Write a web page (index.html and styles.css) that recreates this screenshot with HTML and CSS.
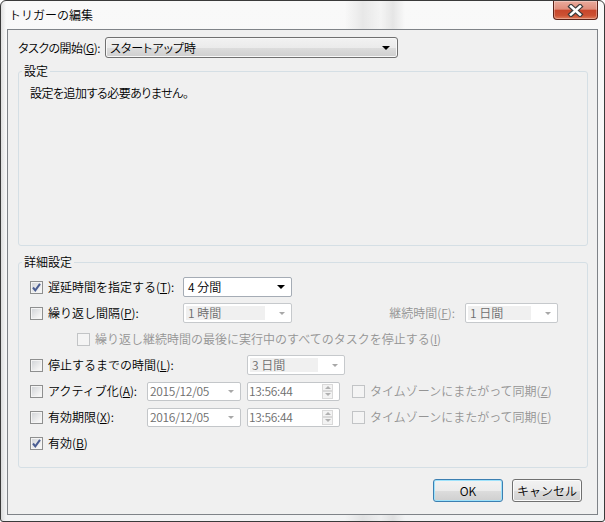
FILE: index.html
```html
<!DOCTYPE html>
<html lang="ja">
<head>
    <meta charset="UTF-8">
    <title>トリガーの編集</title>
    <link rel="stylesheet" href="styles.css">
</head>
<body>
    <div class="window">
        <div class="titlebar">
            <span class="title">トリガーの編集</span>
            <button class="close-btn">
                <svg width="17" height="13" viewBox="0 0 17 13">
                    <path d="M4 2.5 L13 10.5 M13 2.5 L4 10.5" stroke="#3b3b3b" stroke-width="5" stroke-linecap="square"/>
                    <path d="M4 2.5 L13 10.5 M13 2.5 L4 10.5" stroke="#ffffff" stroke-width="2.6" stroke-linecap="square"/>
                </svg>
            </button>
        </div>

        <div class="client">
            <!-- Start condition -->
            <div class="start-row">
                <span class="start-label">タスクの開始(<u>G</u>):</span>
                <div class="dropdown">
                    <span class="dropdown-text">スタートアップ時</span>
                    <span class="arrow"></span>
                </div>
            </div>

            <fieldset class="group">
                <legend>設定</legend>
                <div class="settings-body">設定を追加する必要ありません。</div>
            </fieldset>

            <fieldset class="group group-advanced">
                <legend>詳細設定</legend>
                <div class="rows">
                    <div class="row">
                        <span class="check checked">
                            <svg width="11" height="11" viewBox="0 0 11 11"><path d="M2 5.5 L4.3 8.3 L9 1.8" fill="none" stroke="#4a5d92" stroke-width="2"/></svg>
                        </span>
                        <span class="label w-combo">遅延時間を指定する(<u>T</u>):</span>
                        <div class="combo combo-short">
                            <span class="combo-text">4 分間</span>
                            <span class="arrow"></span>
                        </div>
                    </div>

                    <div class="row">
                        <span class="check"></span>
                        <span class="label w-combo">繰り返し間隔(<u>P</u>):</span>
                        <div class="combo combo-short disabled">
                            <span class="combo-text">1 時間</span>
                            <span class="arrow"></span>
                        </div>
                        <span class="label disabled-text w-duration">継続時間(<u>F</u>):</span>
                        <div class="combo combo-duration disabled">
                            <span class="combo-text">1 日間</span>
                            <span class="arrow"></span>
                        </div>
                    </div>

                    <div class="row row-indent">
                        <span class="check disabled"></span>
                        <span class="label disabled-text">繰り返し継続時間の最後に実行中のすべてのタスクを停止する(<u>I</u>)</span>
                    </div>

                    <div class="row">
                        <span class="check"></span>
                        <span class="label w-stop">停止するまでの時間(<u>L</u>):</span>
                        <div class="combo combo-stop disabled">
                            <span class="combo-text">3 日間</span>
                            <span class="arrow"></span>
                        </div>
                    </div>

                    <div class="row">
                        <span class="check"></span>
                        <span class="label w-date">アクティブ化(<u>A</u>):</span>
                        <div class="datebox">
                            <span class="field-text">2015/12/05</span>
                            <span class="arrow"></span>
                        </div>
                        <div class="timebox">
                            <span class="field-text">13:56:44</span>
                            <span class="spin"><span><i class="up"></i></span><span><i class="down"></i></span></span>
                        </div>
                        <span class="check disabled"></span>
                        <span class="label disabled-text">タイムゾーンにまたがって同期(<u>Z</u>)</span>
                    </div>

                    <div class="row">
                        <span class="check"></span>
                        <span class="label w-date">有効期限(<u>X</u>):</span>
                        <div class="datebox">
                            <span class="field-text">2016/12/05</span>
                            <span class="arrow"></span>
                        </div>
                        <div class="timebox">
                            <span class="field-text">13:56:44</span>
                            <span class="spin"><span><i class="up"></i></span><span><i class="down"></i></span></span>
                        </div>
                        <span class="check disabled"></span>
                        <span class="label disabled-text">タイムゾーンにまたがって同期(<u>E</u>)</span>
                    </div>

                    <div class="row">
                        <span class="check checked">
                            <svg width="11" height="11" viewBox="0 0 11 11"><path d="M2 5.5 L4.3 8.3 L9 1.8" fill="none" stroke="#4a5d92" stroke-width="2"/></svg>
                        </span>
                        <span class="label">有効(<u>B</u>)</span>
                    </div>
                </div>
            </fieldset>

            <div class="buttons">
                <button class="btn btn-default">OK</button>
                <button class="btn">キャンセル</button>
            </div>
        </div>
    </div>
</body>
</html>
```

FILE: styles.css
```css
/* Basic reset */
* {
    margin: 0;
    padding: 0;
    box-sizing: border-box;
}

body {
    background-color: #ffffff;
    font-family: "Noto Sans CJK JP", "Noto Sans", sans-serif;
    font-size: 12px;
    font-weight: 350;
    line-height: 14px;
    color: #000000;
}

u {
    text-decoration: underline;
    text-underline-offset: 1px;
}

/* Window frame */
.window {
    width: 605px;
    height: 522px;
    display: flex;
    flex-direction: column;
    padding: 0 6px 6px;
    border: 1px solid #3a3a3a;
    border-radius: 6px 6px 3px 3px;
    background:
        linear-gradient(90deg, rgba(0, 0, 0, 0.10) 0, rgba(0, 0, 0, 0) 5px),
        linear-gradient(90deg, rgba(0, 0, 0, 0) 57%, rgba(0, 0, 0, 0.07) 60%, rgba(0, 0, 0, 0.02) 63%, rgba(0, 0, 0, 0.08) 65%, rgba(0, 0, 0, 0) 67%),
        linear-gradient(#f9f9f9, #f2f3f4);
}

.titlebar {
    height: 28px;
    display: flex;
    justify-content: space-between;
    align-items: flex-start;
}

.title {
    padding-left: 2px;
    line-height: 28px;
    font-size: 12px;
}

.close-btn {
    width: 45px;
    height: 19px;
    display: flex;
    align-items: center;
    justify-content: center;
    border: 1px solid #5c2218;
    border-top: none;
    border-radius: 0 0 4px 4px;
    background: linear-gradient(#e9ab9d 0%, #df8d7b 45%, #c8462b 52%, #cc5133 80%, #e27d5c 100%);
    box-shadow: inset 0 0 0 1px rgba(255, 255, 255, 0.3);
}

/* Client area */
.client {
    flex: 1;
    display: flex;
    flex-direction: column;
    padding: 0 9px 0 10px;
    background-color: #f0f0f0;
    border: 1px solid #7f8388;
}

.start-row {
    display: flex;
    align-items: center;
    padding-top: 7px;
}

.start-label {
    width: 87px;
    flex-shrink: 0;
    white-space: nowrap;
    letter-spacing: -0.5px;
    font-feature-settings: "palt";
}

.dropdown {
    width: 293px;
    height: 21px;
    display: flex;
    align-items: center;
    justify-content: space-between;
    padding: 0 4px 0 4px;
    border: 1px solid #707070;
    border-radius: 3px;
    background: linear-gradient(#f2f2f2 0%, #ebebeb 50%, #dddddd 51%, #cfcfcf 100%);
    box-shadow: inset 0 0 0 1px #f8f8f8;
    font-feature-settings: "palt";
}

.arrow {
    width: 0;
    height: 0;
    margin-right: 3px;
    border-left: 4px solid transparent;
    border-right: 4px solid transparent;
    border-top: 4px solid #000000;
}

/* Group boxes */
.group {
    margin-top: 6px;
    padding: 0;
    min-width: 0;
    border: 1px solid #d5dfe5;
    border-radius: 3px;
}

.group legend {
    margin-left: 3px;
    padding: 0 2px;
    line-height: 14px;
}

.settings-body {
    height: 167px;
    padding: 8px 0 0 11px;
    letter-spacing: -0.5px;
    font-feature-settings: "palt";
}

.group-advanced {
    margin-top: 9px;
}

.rows {
    padding: 5px 0 11px 11px;
}

.row {
    height: 26px;
    display: flex;
    align-items: center;
}

.row-indent {
    padding-left: 47px;
}

.label {
    white-space: nowrap;
}

.w-combo { width: 135px; }
.w-stop { width: 199px; }
.w-date { width: 99px; }

.w-duration {
    width: 163px;
    margin-right: 10px;
    text-align: right;
}

.disabled-text {
    color: #949494;
}

/* Checkboxes */
.check {
    width: 13px;
    height: 13px;
    flex-shrink: 0;
    display: flex;
    align-items: center;
    justify-content: center;
    margin-right: 5px;
    border: 1px solid #8e8f8f;
    background: linear-gradient(135deg, #cfd2d6 0%, #f1f1f1 70%, #fbfbfb 100%);
    box-shadow: inset 0 0 0 1px #f4f4f4;
}

.check.disabled {
    border-color: #c2c4c6;
    background: #f4f4f4;
    box-shadow: none;
}

.timebox + .check {
    margin-left: 12px;
}

/* Combo boxes */
.combo {
    height: 20px;
    display: flex;
    align-items: center;
    justify-content: space-between;
    padding: 2px 3px 2px 2px;
    background-color: #ffffff;
    border: 1px solid #a5acb5;
    border-radius: 2px;
}

.combo-text {
    padding-left: 2px;
    line-height: 14px;
}

.combo-short { width: 109px; }
.combo-duration { width: 93px; }
.combo-stop { width: 98px; }

.combo.disabled {
    border-color: #c6c9cc;
}

.combo.disabled .combo-text {
    height: 100%;
    flex: 1;
    margin-right: 14px;
    background-color: #f0f0f0;
    color: #6d6d6d;
}

.combo.disabled .arrow,
.datebox .arrow {
    border-top-color: #a8a8a8;
    border-left-width: 3px;
    border-right-width: 3px;
    border-top-width: 3px;
}

/* Date and time pickers */
.datebox,
.timebox {
    height: 19px;
    display: flex;
    align-items: center;
    justify-content: space-between;
    background-color: #ffffff;
    border: 1px solid #c3c6c9;
    border-radius: 2px;
    color: #6d6d6d;
}

.datebox {
    width: 94px;
    margin-right: 6px;
    padding: 0 3px 0 2px;
}

.timebox {
    width: 93px;
    padding: 1px 6px 1px 1px;
}

.field-text {
    letter-spacing: -0.3px;
}

.spin {
    width: 11px;
    height: 100%;
    display: flex;
    flex-direction: column;
}

.spin span {
    flex: 1;
    display: flex;
    align-items: center;
    justify-content: center;
    border: 1px solid #d9d9d9;
    background: #f3f3f3;
}

.spin i {
    width: 0;
    height: 0;
    border-left: 3px solid transparent;
    border-right: 3px solid transparent;
}

.spin i.up { border-bottom: 3px solid #b0b0b0; }
.spin i.down { border-top: 3px solid #b0b0b0; }

/* Dialog buttons */
.buttons {
    display: flex;
    justify-content: flex-end;
    gap: 9px;
    margin-top: 11px;
    padding-right: 6px;
}

.btn {
    width: 70px;
    height: 23px;
    font-family: "Noto Sans CJK JP", "Noto Sans", sans-serif;
    font-size: 12px;
    font-weight: 350;
    color: #000000;
    border: 1px solid #707070;
    border-radius: 3px;
    background: linear-gradient(#f2f2f2 0%, #ebebeb 50%, #dddddd 51%, #cfcfcf 100%);
    box-shadow: inset 0 0 0 1px #fbfbfb;
}

.btn-default {
    border-color: #3c7fb1;
    box-shadow: inset 0 0 0 1px #9ee2fb;
}
```
